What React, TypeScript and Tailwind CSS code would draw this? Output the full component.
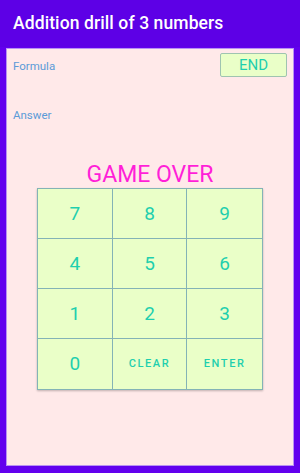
import React from "react";

const keys = ["7", "8", "9", "4", "5", "6", "1", "2", "3", "0", "CLEAR", "ENTER"];

export default function App() {
  return (
    <div
      className="w-[300px] h-[473px] bg-[#6200ee] flex flex-col"
      style={{ fontFamily: "Roboto, 'Noto Sans', sans-serif" }}
    >
      {/* App bar */}
      <div className="h-[47px] shrink-0 flex items-center px-[13px] bg-[#5d00e6]">
        <h1 className="text-white text-[17.5px] font-medium tracking-[0.1px]">
          Addition drill of 3 numbers
        </h1>
      </div>

      {/* Content panel */}
      <div className="mx-[6px] mt-[1px] mb-[7px] flex-1 bg-[#ffe9e9] border border-[#b892f3] flex flex-col">
        <div className="flex items-start justify-between pl-[6px] pr-[6px] pt-[4px]">
          <span className="text-[11.5px] text-[#5b9bd8] mt-[5px]">Formula</span>
          <button className="w-[67px] h-[24px] bg-[#eaffc8] border border-[#9fc4b0] rounded-[2px] text-[#1fcfae] text-[15px] flex items-center justify-center">
            END
          </button>
        </div>

        <div className="pl-[6px] mt-[30px] text-[11.5px] text-[#5b9bd8]">Answer</div>

        <div className="mt-[39px] text-center text-[23px] text-[#ff1fd8] leading-none">
          GAME OVER
        </div>

        <div className="mt-[2px] mx-auto w-[226px] grid grid-cols-3 border border-[#84b3b6] shadow-[0_1px_2px_rgba(0,0,0,0.25)]">
          {keys.map((k, i) => (
            <div
              key={k}
              className={`h-[50px] bg-[#eaffc8] flex items-center justify-center text-[#1fcfae] border-[#84b3b6] ${
                i % 3 !== 2 ? "border-r" : ""
              } ${i < 9 ? "border-b" : ""} ${
                k.length > 1 ? "text-[11px] font-medium tracking-[1.6px]" : "text-[19px]"
              }`}
            >
              {k}
            </div>
          ))}
        </div>
      </div>
    </div>
  );
}
